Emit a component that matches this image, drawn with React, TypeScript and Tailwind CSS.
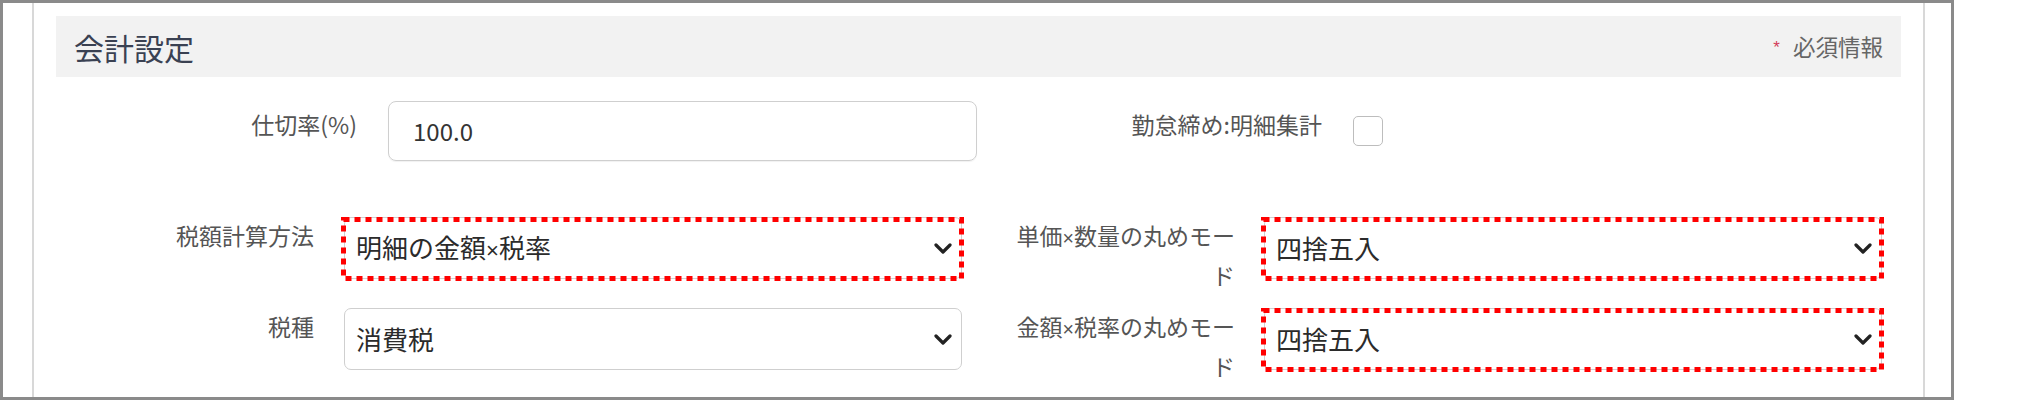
import React from 'react';

const jp = "font-['Noto_Sans_CJK_JP','Noto_Sans',sans-serif]";

// narrow multiplication sign, as in the original UI font
function X() {
  return <span className="font-['Liberation_Sans',sans-serif] text-[0.85em]">×</span>;
}

function Chevron() {
  return (
    <svg width="18" height="11" viewBox="0 0 18 11" className="shrink-0">
      <path d="M2 2 L9 9 L16 2" fill="none" stroke="#222" strokeWidth="3.2" strokeLinecap="round" strokeLinejoin="round" />
    </svg>
  );
}

function Select({ value, marked }: { value: React.ReactNode; marked?: boolean }) {
  return (
    <div className="relative h-[62px] w-[618px] shrink-0 rounded-[7px] border border-[#cfcfcf] bg-white flex items-center justify-between pl-[11px] pr-[9px]">
      <span className="text-[26px] leading-none text-[#2b2b2b]">{value}</span>
      <Chevron />
      {/* red annotation frame */}
      {marked && (
        <svg className="absolute -left-[4px] -top-[1px] pointer-events-none" width="623" height="64">
          <rect x="2.5" y="2.5" width="618" height="59" fill="none" stroke="#ff0000" strokeWidth="5" strokeDasharray="6 5" />
        </svg>
      )}
    </div>
  );
}

function Label({ children, w }: { children: React.ReactNode; w: string }) {
  return (
    <div className={`${w} ml-[30px] shrink-0 text-right text-[23px] leading-[37px] text-[#555] whitespace-nowrap`}>
      {children}
    </div>
  );
}

export default function App() {
  return (
    <div className={`w-[2027px] h-[406px] bg-white ${jp}`}>
      <div className="w-[1954px] h-[400px] border-[3px] border-[#8a8a8a] pl-[29px] pr-[26px] overflow-hidden">
        <div className="h-full border-x-2 border-[#d8d8d8] px-[22px] pt-[13px]">
          {/* Section header */}
          <div className="h-[61px] bg-[#f2f2f2] flex items-center justify-between pl-[18px] pr-[18px]">
            <h2 className="text-[30px] leading-none text-[#3a4152]">会計設定</h2>
            <div className="flex items-center text-[22.5px] leading-none text-[#666]">
              <span className="font-['Liberation_Sans',sans-serif] text-[17px] leading-none text-[#d23c5a] mr-[13px] mt-[2px]">*</span>
              <span>必須情報</span>
            </div>
          </div>

          {/* Row 1 */}
          <div className="mt-[24px] flex items-start">
            <div className="w-[921px] flex items-start shrink-0">
              <Label w="w-[271px]">
                <div className="pt-[5px]">仕切率(%)</div>
              </Label>
              <div className="ml-[31px] w-[615px] h-[60px] rounded-[8px] border border-[#cfcfcf] shadow-[0_1px_1px_rgba(0,0,0,0.06)] flex items-center pl-[24px] text-[24px] text-[#333]">
                100.0
              </div>
            </div>
            <div className="flex items-start">
              <Label w="w-[315px]">
                <div className="pt-[5px]">勤怠締め:明細集計</div>
              </Label>
              <div className="ml-[31px] mt-[15px] w-[30px] h-[30px] rounded-[5px] border border-[#bdbdbd] bg-white" />
            </div>
          </div>

          {/* Row 2 */}
          <div className="mt-[56px] flex items-start">
            <div className="w-[921px] flex items-start shrink-0">
              <Label w="w-[228px]">税額計算方法</Label>
              <div className="ml-[30px]">
                <Select value={<>明細の金額<X />税率</>} marked />
              </div>
            </div>
            <div className="flex items-start">
              <Label w="w-[228px]">
                単価<X />数量の丸めモー
                <br />ド
              </Label>
              <div className="ml-[29px]">
                <Select value="四捨五入" marked />
              </div>
            </div>
          </div>

          {/* Row 3 */}
          <div className="mt-[14px] flex items-start">
            <div className="w-[921px] flex items-start shrink-0">
              <Label w="w-[228px]">税種</Label>
              <div className="ml-[30px]">
                <Select value="消費税" />
              </div>
            </div>
            <div className="flex items-start">
              <Label w="w-[228px]">
                金額<X />税率の丸めモー
                <br />ド
              </Label>
              <div className="ml-[29px]">
                <Select value="四捨五入" marked />
              </div>
            </div>
          </div>
        </div>
      </div>
    </div>
  );
}
